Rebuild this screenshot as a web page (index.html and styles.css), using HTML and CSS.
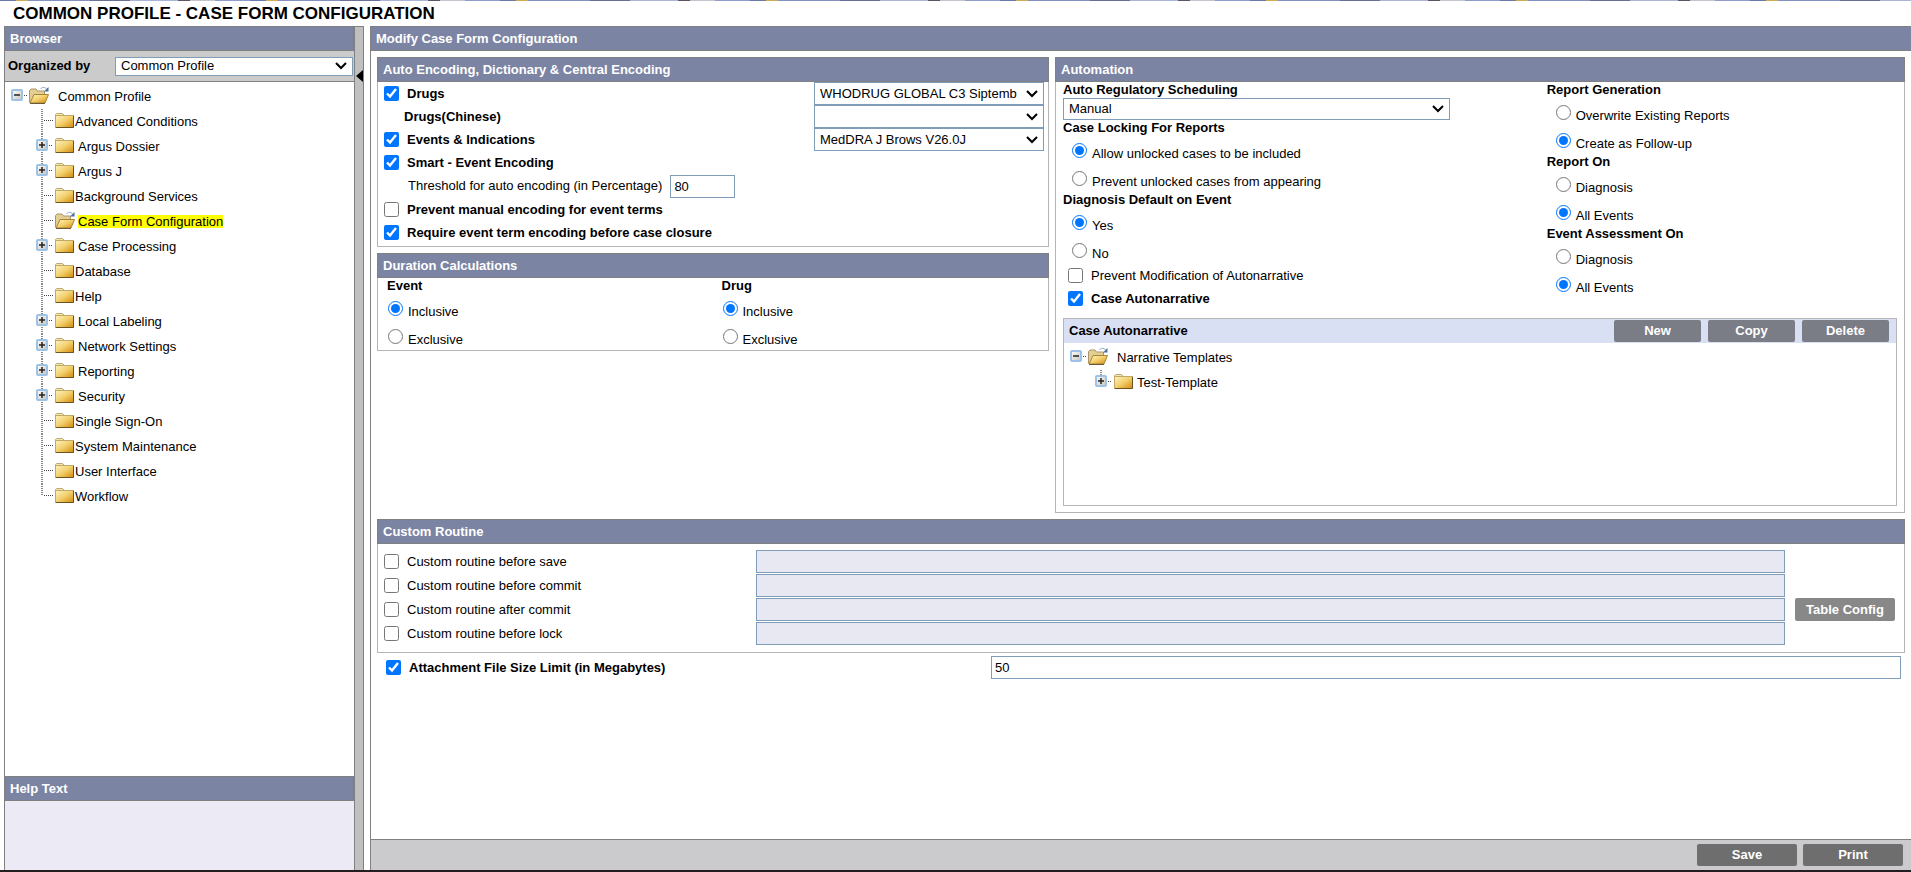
FILE: index.html
```html
<!DOCTYPE html>
<html lang="en">
<head>
    <meta charset="UTF-8">
    <meta name="viewport" content="width=device-width, initial-scale=1.0">
    <title>Common Profile - Case Form Configuration</title>
    <link rel="stylesheet" href="styles.css">
</head>
<body>

    <!-- Tree icons -->
    <svg class="icon-defs" aria-hidden="true">
        <defs>
            <linearGradient id="gold" x1="0" y1="0" x2="1" y2="1">
                <stop offset="0" stop-color="#fff3bd"/>
                <stop offset="0.5" stop-color="#f2cf6c"/>
                <stop offset="1" stop-color="#d48a08"/>
            </linearGradient>
            <linearGradient id="box" x1="0" y1="0" x2="1" y2="1">
                <stop offset="0" stop-color="#ffffff"/>
                <stop offset="1" stop-color="#c9c4b8"/>
            </linearGradient>
        </defs>
        <symbol id="folder" viewBox="0 0 20 25">
            <path d="M0.5 7V5.5L1.5 4.5H7.5L9.5 6.5H18.5V8H0.5Z" fill="#f6e7a8" stroke="#b9ab80"/>
            <rect x="0.5" y="6.5" width="18" height="12" fill="url(#gold)" stroke="#c0a868"/>
            <path d="M1 18.5H18.5V7" fill="none" stroke="#6b5420"/>
        </symbol>
        <symbol id="folder-open" viewBox="0 0 20 25">
            <path d="M0.5 18.5V6.5L2 5H7L8.5 7H15.5V11" fill="#e3cf92" stroke="#a8956a"/>
            <path d="M1 19L5 10.5H19.5L16 19Z" fill="url(#gold)" stroke="#a98435"/>
            <path d="M1 19.5H16" stroke="#6b5a3a"/>
            <path d="M11.5 5C13 3 15.5 2.5 17.5 5" fill="none" stroke="#8ea9c6"/>
            <path d="M19.5 3V7.5H15Z" fill="#4f6f9c"/>
        </symbol>
        <symbol id="toggle" viewBox="0 0 12 12">
            <rect x="1" y="1" width="10" height="10" rx="1" fill="url(#box)" stroke="#9cc3e6" stroke-width="2"/>
            <path d="M3 6H9" stroke="#222" stroke-width="1.5"/>
        </symbol>
        <symbol id="root" viewBox="0 0 18 25">
            <use href="#toggle" y="5" width="12" height="12"/>
            <path d="M13 11.5H17" stroke="#444" stroke-dasharray="1 1"/>
        </symbol>
        <symbol id="leaf" viewBox="0 0 19 25">
            <path d="M6 0V25" stroke="#888" stroke-width="2" stroke-dasharray="1 1"/>
            <path d="M8 11.5H18" stroke="#444" stroke-dasharray="1 1"/>
        </symbol>
        <symbol id="leaf-last" viewBox="0 0 19 25">
            <path d="M6 0V12" stroke="#888" stroke-width="2" stroke-dasharray="1 1"/>
            <path d="M8 11.5H18" stroke="#444" stroke-dasharray="1 1"/>
        </symbol>
        <symbol id="node" viewBox="0 0 19 25">
            <path d="M6 0V25" stroke="#888" stroke-width="2" stroke-dasharray="1 1"/>
            <path d="M13 11.5H17" stroke="#444" stroke-dasharray="1 1"/>
            <use href="#toggle" y="5" width="12" height="12"/>
            <path d="M6 8V14" stroke="#222" stroke-width="1.5"/>
        </symbol>
        <symbol id="node-last" viewBox="0 0 19 25">
            <path d="M6 0V6" stroke="#888" stroke-width="2" stroke-dasharray="1 1"/>
            <path d="M13 11.5H17" stroke="#444" stroke-dasharray="1 1"/>
            <use href="#toggle" y="5" width="12" height="12"/>
            <path d="M6 8V14" stroke="#222" stroke-width="1.5"/>
        </symbol>
    </svg>

    <div class="banner"></div>
    <h1 class="page-title">COMMON PROFILE - CASE FORM CONFIGURATION</h1>

    <div class="workspace">

        <aside class="browser">
            <h2 class="bar">Browser</h2>
            <div class="organize">
                <label for="organized-by">Organized by</label>
                <select id="organized-by">
                    <option>Common Profile</option>
                </select>
            </div>
            <nav class="tree-pane">
                <ul class="tree" id="browser-tree">
                    <li>
                        <a href="#" class="tree-root"><svg width="18" height="25"><use href="#root"/></svg><svg width="20" height="25"><use href="#folder-open"/></svg><span>Common Profile</span></a>
                        <ul>
                            <li><a href="#"><svg width="19" height="25"><use href="#leaf"/></svg><svg width="20" height="25"><use href="#folder"/></svg><span>Advanced Conditions</span></a></li>
                            <li><a href="#" class="parent"><svg width="19" height="25"><use href="#node"/></svg><svg width="20" height="25"><use href="#folder"/></svg><span>Argus Dossier</span></a></li>
                            <li><a href="#" class="parent"><svg width="19" height="25"><use href="#node"/></svg><svg width="20" height="25"><use href="#folder"/></svg><span>Argus J</span></a></li>
                            <li><a href="#"><svg width="19" height="25"><use href="#leaf"/></svg><svg width="20" height="25"><use href="#folder"/></svg><span>Background Services</span></a></li>
                            <li><a href="#" class="parent selected"><svg width="19" height="25"><use href="#leaf"/></svg><svg width="20" height="25"><use href="#folder-open"/></svg><span>Case Form Configuration</span></a></li>
                            <li><a href="#" class="parent"><svg width="19" height="25"><use href="#node"/></svg><svg width="20" height="25"><use href="#folder"/></svg><span>Case Processing</span></a></li>
                            <li><a href="#"><svg width="19" height="25"><use href="#leaf"/></svg><svg width="20" height="25"><use href="#folder"/></svg><span>Database</span></a></li>
                            <li><a href="#"><svg width="19" height="25"><use href="#leaf"/></svg><svg width="20" height="25"><use href="#folder"/></svg><span>Help</span></a></li>
                            <li><a href="#" class="parent"><svg width="19" height="25"><use href="#node"/></svg><svg width="20" height="25"><use href="#folder"/></svg><span>Local Labeling</span></a></li>
                            <li><a href="#" class="parent"><svg width="19" height="25"><use href="#node"/></svg><svg width="20" height="25"><use href="#folder"/></svg><span>Network Settings</span></a></li>
                            <li><a href="#" class="parent"><svg width="19" height="25"><use href="#node"/></svg><svg width="20" height="25"><use href="#folder"/></svg><span>Reporting</span></a></li>
                            <li><a href="#" class="parent"><svg width="19" height="25"><use href="#node"/></svg><svg width="20" height="25"><use href="#folder"/></svg><span>Security</span></a></li>
                            <li><a href="#"><svg width="19" height="25"><use href="#leaf"/></svg><svg width="20" height="25"><use href="#folder"/></svg><span>Single Sign-On</span></a></li>
                            <li><a href="#"><svg width="19" height="25"><use href="#leaf"/></svg><svg width="20" height="25"><use href="#folder"/></svg><span>System Maintenance</span></a></li>
                            <li><a href="#"><svg width="19" height="25"><use href="#leaf"/></svg><svg width="20" height="25"><use href="#folder"/></svg><span>User Interface</span></a></li>
                            <li><a href="#"><svg width="19" height="25"><use href="#leaf-last"/></svg><svg width="20" height="25"><use href="#folder"/></svg><span>Workflow</span></a></li>
                        </ul>
                    </li>
                </ul>
            </nav>
            <h2 class="bar">Help Text</h2>
            <div class="help-text"></div>
        </aside>

        <div class="splitter">
            <svg width="7" height="12" viewBox="0 0 7 12"><path d="M7 0V12L0 6Z"/></svg>
        </div>

        <main class="editor">
            <h2 class="bar bar-wide">Modify Case Form Configuration</h2>

            <form class="form" id="config-form">
                <div class="columns">
                    <div class="column">
                        <section class="panel">
                            <h3 class="bar">Auto Encoding, Dictionary &amp; Central Encoding</h3>
                            <div class="encoding">
                                <div class="row strong">
                                    <input type="checkbox" id="drugs" checked>
                                    <label for="drugs">Drugs</label>
                                    <select class="dictionary" aria-label="Drugs dictionary">
                                        <option>WHODRUG GLOBAL C3 Siptemb</option>
                                    </select>
                                </div>
                                <div class="row strong">
                                    <label for="drugs-cn" class="no-check">Drugs(Chinese)</label>
                                    <select class="dictionary" id="drugs-cn">
                                        <option></option>
                                    </select>
                                </div>
                                <div class="row strong">
                                    <input type="checkbox" id="events" checked>
                                    <label for="events">Events &amp; Indications</label>
                                    <select class="dictionary" aria-label="Events dictionary">
                                        <option>MedDRA J Brows V26.0J</option>
                                    </select>
                                </div>
                                <div class="row strong">
                                    <input type="checkbox" id="smart" checked>
                                    <label for="smart">Smart - Event Encoding</label>
                                </div>
                                <div class="row threshold">
                                    <label for="threshold">Threshold for auto encoding (in Percentage)</label>
                                    <input type="text" id="threshold" value="80">
                                </div>
                                <div class="row strong">
                                    <input type="checkbox" id="prevent-manual">
                                    <label for="prevent-manual">Prevent manual encoding for event terms</label>
                                </div>
                                <div class="row strong">
                                    <input type="checkbox" id="require" checked>
                                    <label for="require">Require event term encoding before case closure</label>
                                </div>
                            </div>
                        </section>

                        <section class="panel">
                            <h3 class="bar">Duration Calculations</h3>
                            <div class="duration">
                                <div>
                                    <h4>Event</h4>
                                    <label class="radio"><input type="radio" name="dur-event" checked><span>Inclusive</span></label>
                                    <label class="radio"><input type="radio" name="dur-event"><span>Exclusive</span></label>
                                </div>
                                <div>
                                    <h4>Drug</h4>
                                    <label class="radio"><input type="radio" name="dur-drug" checked><span>Inclusive</span></label>
                                    <label class="radio"><input type="radio" name="dur-drug"><span>Exclusive</span></label>
                                </div>
                            </div>
                        </section>
                    </div>

                    <section class="panel">
                        <h3 class="bar">Automation</h3>
                        <div class="automation">
                            <div class="options">
                                <div>
                                    <h4><label for="scheduling">Auto Regulatory Scheduling</label></h4>
                                    <select class="scheduling" id="scheduling">
                                        <option>Manual</option>
                                    </select>
                                    <h4>Case Locking For Reports</h4>
                                    <label class="radio"><input type="radio" name="locking" checked><span>Allow unlocked cases to be included</span></label>
                                    <label class="radio"><input type="radio" name="locking"><span>Prevent unlocked cases from appearing</span></label>
                                    <h4>Diagnosis Default on Event</h4>
                                    <label class="radio"><input type="radio" name="diagnosis" checked><span>Yes</span></label>
                                    <label class="radio"><input type="radio" name="diagnosis"><span>No</span></label>
                                    <div class="row">
                                        <input type="checkbox" id="prevent-mod">
                                        <label for="prevent-mod">Prevent Modification of Autonarrative</label>
                                    </div>
                                    <div class="row strong">
                                        <input type="checkbox" id="autonarrative" checked>
                                        <label for="autonarrative">Case Autonarrative</label>
                                    </div>
                                </div>
                                <div>
                                    <h4>Report Generation</h4>
                                    <label class="radio"><input type="radio" name="generation"><span>Overwrite Existing Reports</span></label>
                                    <label class="radio"><input type="radio" name="generation" checked><span>Create as Follow-up</span></label>
                                    <h4>Report On</h4>
                                    <label class="radio"><input type="radio" name="report-on"><span>Diagnosis</span></label>
                                    <label class="radio"><input type="radio" name="report-on" checked><span>All Events</span></label>
                                    <h4>Event Assessment On</h4>
                                    <label class="radio"><input type="radio" name="assessment"><span>Diagnosis</span></label>
                                    <label class="radio"><input type="radio" name="assessment" checked><span>All Events</span></label>
                                </div>
                            </div>

                            <div class="narrative">
                                <div class="narrative-head">
                                    <h4>Case Autonarrative</h4>
                                    <button type="button" class="btn btn-small">New</button>
                                    <button type="button" class="btn btn-small">Copy</button>
                                    <button type="button" class="btn btn-small">Delete</button>
                                </div>
                                <ul class="tree" id="narrative-tree">
                                    <li>
                                        <a href="#" class="tree-root"><svg width="18" height="25"><use href="#root"/></svg><svg width="20" height="25"><use href="#folder-open"/></svg><span>Narrative Templates</span></a>
                                        <ul>
                                            <li><a href="#" class="parent"><svg width="19" height="25"><use href="#node-last"/></svg><svg width="20" height="25"><use href="#folder"/></svg><span>Test-Template</span></a></li>
                                        </ul>
                                    </li>
                                </ul>
                            </div>
                        </div>
                    </section>
                </div>

                <section class="panel">
                    <h3 class="bar">Custom Routine</h3>
                    <div class="routines">
                        <div class="row">
                            <input type="checkbox" id="before-save">
                            <label for="before-save">Custom routine before save</label>
                        </div>
                        <input type="text" class="routine-name" aria-label="Routine before save" disabled>
                        <span></span>

                        <div class="row">
                            <input type="checkbox" id="before-commit">
                            <label for="before-commit">Custom routine before commit</label>
                        </div>
                        <input type="text" class="routine-name" aria-label="Routine before commit" disabled>
                        <span></span>

                        <div class="row">
                            <input type="checkbox" id="after-commit">
                            <label for="after-commit">Custom routine after commit</label>
                        </div>
                        <input type="text" class="routine-name" aria-label="Routine after commit" disabled>
                        <button type="button" class="btn btn-config">Table Config</button>

                        <div class="row">
                            <input type="checkbox" id="before-lock">
                            <label for="before-lock">Custom routine before lock</label>
                        </div>
                        <input type="text" class="routine-name" aria-label="Routine before lock" disabled>
                        <span></span>
                    </div>
                </section>

                <div class="attachment">
                    <div class="row strong">
                        <input type="checkbox" id="attachment" checked>
                        <label for="attachment">Attachment File Size Limit (in Megabytes)</label>
                    </div>
                    <input type="text" value="50" aria-label="Attachment file size limit">
                </div>
            </form>

            <footer class="actions">
                <button type="submit" form="config-form" class="btn">Save</button>
                <button type="button" class="btn">Print</button>
            </footer>
        </main>
    </div>

</body>
</html>
```
FILE: styles.css
```css
* {
    margin: 0;
    padding: 0;
    box-sizing: border-box;
}

body {
    height: 100vh;
    display: flex;
    flex-direction: column;
    overflow: hidden;
    background: #fff;
    color: #000;
    font-family: "Liberation Sans", Arial, sans-serif;
    font-size: 13px;
    line-height: 16px;
    border-bottom: 2px solid #231f20;
}

ul {
    list-style: none;
}

h4 {
    font-size: 13px;
}

.icon-defs {
    position: absolute;
    width: 0;
    height: 0;
}

/* Thin coloured strip above the title */
.banner {
    flex: none;
    height: 1px;
    background: repeating-linear-gradient(to right, #6d78ab 0 16px, #d0ac55 16px 28px, #8390c0 28px 90px, #6a6f96 90px 130px, #a9b4d8 130px 178px, #5a5560 178px 190px, #c4c4cc 190px 215px, #8f9ccb 215px 250px);
}

.page-title {
    flex: none;
    height: 25px;
    padding-left: 13px;
    font-size: 17px;
    line-height: 25px;
}

.workspace {
    flex: 1;
    min-height: 0;
    display: flex;
    padding-left: 4px;
}

.bar {
    flex: none;
    height: 25px;
    padding-left: 5px;
    border: 1px solid #808080;
    background: #7c84a3;
    color: #fff;
    font-size: 13px;
    line-height: 23px;
}

.bar-wide {
    border-left: none;
    border-right: none;
}

/* Form controls */
select,
input[type="text"] {
    height: 23px;
    border: 1px solid #7f9db9;
    background: #fff;
    color: #000;
    font: inherit;
}

select {
    appearance: none;
    padding: 0 20px 0 5px;
    border-radius: 0;
    background: #fff url('data:image/svg+xml,<svg xmlns="http://www.w3.org/2000/svg" width="12" height="8"><path d="M1 1L6 6L11 1" fill="none" stroke="black" stroke-width="2"/></svg>') no-repeat right 5px center;
}

input[type="text"] {
    padding: 0 3px;
}

input[type="checkbox"],
input[type="radio"] {
    flex: none;
    width: 15px;
    height: 15px;
}

.btn {
    width: 100px;
    height: 22px;
    border: none;
    border-radius: 2px;
    background: #6e6e6e;
    color: #fff;
    font: inherit;
    font-weight: bold;
    cursor: pointer;
}

.row {
    display: flex;
    align-items: center;
    gap: 8px;
    height: 23px;
}

.strong label {
    font-weight: bold;
}

.radio {
    display: flex;
    align-items: center;
    gap: 5px;
    height: 28px;
}

.radio span {
    padding-top: 8px;
}

/* Left side */
.browser {
    width: 350px;
    display: flex;
    flex-direction: column;
    border-left: 1px solid #808080;
}

.browser .bar {
    border-left: none;
}

.organize {
    flex: none;
    display: flex;
    align-items: center;
    height: 31px;
    padding: 0 1px 0 3px;
    background: #cbcbcb;
    border-bottom: 1px solid #808080;
}

.organize label {
    width: 107px;
    font-weight: bold;
}

.organize select {
    flex: 1;
    height: 19px;
}

.tree-pane {
    flex: 1;
    min-height: 0;
    overflow: hidden;
}

.tree {
    padding: 2px 0 0 6px;
}

.tree ul {
    padding-left: 25px;
}

.tree a {
    display: flex;
    align-items: center;
    height: 25px;
    color: #000;
    text-decoration: none;
}

.tree svg {
    flex: none;
}

.tree .tree-root span {
    margin-left: 9px;
}

.tree .parent span {
    margin-left: 3px;
}

.tree .selected span {
    height: 13px;
    line-height: 13px;
    background: #ff0;
}

.help-text {
    flex: none;
    height: 69px;
    background: #eceaf4;
}

.splitter {
    width: 10px;
    padding: 43px 0 0 1px;
    border: 1px solid #808080;
    border-bottom: none;
    background: #c0c0c0;
}

.splitter svg {
    display: block;
}

/* Right side */
.editor {
    flex: 1;
    min-width: 0;
    margin-left: 6px;
    display: flex;
    flex-direction: column;
    border-left: 1px solid #808080;
}

.form {
    flex: 1;
    min-height: 0;
    display: flex;
    flex-direction: column;
    gap: 6px;
    padding: 6px 6px 0;
}

.columns {
    display: grid;
    grid-template-columns: 672fr 850fr;
    gap: 6px;
}

.column {
    display: flex;
    flex-direction: column;
    gap: 6px;
}

.panel {
    border: 1px solid #b5b5b5;
    border-top: none;
}

.panel .bar {
    margin: 0 -1px;
}

.encoding {
    padding: 0 4px 2px 6px;
}

.no-check {
    padding-left: 20px;
}

.dictionary {
    width: 230px;
    margin-left: auto;
}

.threshold {
    height: 24px;
    padding-left: 24px;
}

.threshold input {
    width: 65px;
}

.duration {
    display: grid;
    grid-template-columns: 1fr 1fr;
    gap: 8px;
    padding-left: 9px;
}

.duration .radio {
    padding-left: 1px;
}

.automation {
    padding: 0 7px 6px;
}

.options {
    display: grid;
    grid-template-columns: 58fr 42fr;
}

.options .row {
    padding-left: 5px;
}

.options .radio {
    padding-left: 9px;
}

.scheduling {
    display: block;
    width: 80%;
    height: 22px;
}

.narrative {
    height: 188px;
    margin-top: 8px;
    border: 1px solid #b5b5b5;
}

.narrative-head {
    display: flex;
    align-items: center;
    gap: 7px;
    height: 24px;
    padding: 0 7px 0 5px;
    background: #dae0f4;
}

.narrative-head h4 {
    margin-right: auto;
}

.btn-small {
    width: 87px;
    background: #7a7c86;
}

.routines {
    display: grid;
    grid-template-columns: 378fr 1029fr 119px;
    row-gap: 1px;
    padding: 6px 0 7px;
}

.routines .row {
    padding: 0 6px;
}

.routines .routine-name {
    background: #e8e8f3;
}

.btn-config {
    height: 23px;
    margin-left: 10px;
    background: #888;
}

.attachment {
    display: grid;
    grid-template-columns: 614fr 910fr;
    margin: -3px 4px 0 0;
}

.attachment .row {
    padding-left: 9px;
}

.actions {
    flex: none;
    display: flex;
    justify-content: flex-end;
    gap: 6px;
    height: 31px;
    padding: 4px 8px 0 0;
    border-top: 1px solid #808080;
    background: #cbcbcd;
}
```
